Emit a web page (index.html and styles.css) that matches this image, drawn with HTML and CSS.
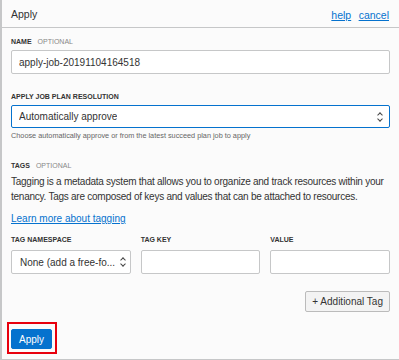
FILE: index.html
```html
<!DOCTYPE html>
<html lang="en">
<head>
    <meta charset="UTF-8">
    <meta name="viewport" content="width=device-width, initial-scale=1.0">
    <title>Apply</title>
    <link rel="stylesheet" href="styles.css">
</head>
<body>
    <div class="panel">
        <div class="panel-header">
            <span class="panel-title">Apply</span>
            <span class="header-links">
                <a href="#">help</a>
                <a href="#">cancel</a>
            </span>
        </div>

        <div class="panel-body">
            <div class="field">
                <label class="field-label">Name <span class="optional">Optional</span></label>
                <input class="text-input" type="text" value="apply-job-20191104164518">
            </div>

            <div class="field">
                <label class="field-label">Apply job plan resolution</label>
                <div class="select focused">
                    <span class="select-value">Automatically approve</span>
                    <span class="chevrons"></span>
                </div>
                <div class="help-text">Choose automatically approve or from the latest succeed plan job to apply</div>
            </div>

            <div class="field tags">
                <label class="field-label">Tags <span class="optional">Optional</span></label>
                <p class="tags-text">Tagging is a metadata system that allows you to organize and track resources within your tenancy. Tags are composed of keys and values that can be attached to resources.</p>
                <a class="learn-link" href="#">Learn more about tagging</a>

                <div class="tag-grid">
                    <div class="tag-col">
                        <label class="field-label">Tag namespace</label>
                        <div class="select small">
                            <span class="select-value">None (add a free-fo...</span>
                            <span class="chevrons"></span>
                        </div>
                    </div>
                    <div class="tag-col">
                        <label class="field-label">Tag key</label>
                        <input class="text-input small" type="text">
                    </div>
                    <div class="tag-col">
                        <label class="field-label">Value</label>
                        <input class="text-input small" type="text">
                    </div>
                </div>

                <div class="tag-actions">
                    <button class="btn-secondary">+ Additional Tag</button>
                </div>
            </div>

            <div class="footer">
                <span class="highlight">
                    <button class="btn-primary">Apply</button>
                </span>
            </div>
        </div>
    </div>
</body>
</html>
```

FILE: styles.css
```css
body {
    margin: 0;
    padding: 0;
    font-family: "Liberation Sans", Arial, sans-serif;
    background-color: #fbfbfb;
    color: #2b2b2b;
}
.panel {
    width: 399px;
    height: 360px;
    box-sizing: border-box;
    border-left: 2px solid #c6c7c8;
    border-bottom: 1px solid #c6c7c8;
    background-color: #fbfbfb;
    overflow: hidden;
}
.panel-header {
    height: 28px;
    box-sizing: border-box;
    border-bottom: 1px solid #c6c7c8;
    display: flex;
    align-items: center;
    justify-content: space-between;
    padding: 0 10px 0 9px;
}
.panel-title {
    font-size: 10.5px;
    color: #333;
}
.header-links a {
    font-size: 10.5px;
    color: #0572ce;
    margin-left: 3px;
}
.panel-body {
    padding: 10px 9px 0 9px;
}
.field {
    margin-bottom: 19px;
}
.field-label {
    display: block;
    font-size: 7px;
    font-weight: bold;
    text-transform: uppercase;
    color: #333;
    margin-bottom: 5px;
}
.optional {
    font-weight: normal;
    color: #888;
    margin-left: 4px;
}
.text-input {
    display: block;
    width: 100%;
    height: 24px;
    box-sizing: border-box;
    border: 1px solid #c6c7c8;
    border-radius: 2px;
    background: #fff;
    padding: 0 7px;
    font-family: inherit;
    font-size: 10px;
    color: #333;
    outline: none;
}
.select {
    height: 23px;
    box-sizing: border-box;
    border: 1px solid #c6c7c8;
    border-radius: 2px;
    background: #fff;
    display: flex;
    align-items: center;
    justify-content: space-between;
    padding: 0 6px 0 7px;
    font-size: 10px;
    color: #333;
}
.select-value {
    white-space: nowrap;
    overflow: hidden;
}
.select.focused {
    border-color: #0572ce;
}
.select.small {
    height: 24px;
    padding: 0 4px 0 8px;
}
.chevrons {
    flex: none;
    width: 6px;
    height: 10px;
    position: relative;
}
.chevrons::before,
.chevrons::after {
    content: "";
    position: absolute;
    left: 1px;
    width: 3px;
    height: 3px;
    border-left: 1px solid #444;
    border-top: 1px solid #444;
}
.chevrons::before {
    top: 1px;
    transform: rotate(45deg);
}
.chevrons::after {
    bottom: 1px;
    transform: rotate(-135deg);
}
.help-text {
    font-size: 7.3px;
    color: #666;
    margin-top: 3px;
}
.tags {
    margin-top: 22px;
}
.tags-text {
    margin: 3px 0 4px 0;
    font-size: 10px;
    line-height: 15px;
    letter-spacing: -0.25px;
    color: #333;
}
.learn-link {
    display: inline-block;
    font-size: 10px;
    color: #0572ce;
    margin-bottom: 12px;
}
.tag-grid {
    display: grid;
    grid-template-columns: 1fr 1fr 1fr;
    gap: 10px;
}
.tag-grid .field-label {
    margin-bottom: 7px;
}
.tag-actions {
    display: flex;
    justify-content: flex-end;
    margin-top: 17px;
}
.btn-secondary {
    height: 21px;
    padding: 0 6px;
    font-family: inherit;
    font-size: 10px;
    color: #333;
    background: #f3f3f3;
    border: 1px solid #bbb;
    border-radius: 2px;
    cursor: pointer;
}
.footer {
    margin-top: -9px;
}
.highlight {
    display: inline-block;
    border: 2px solid #e8000d;
    padding: 5px 3px 3px 2px;
    margin-left: -4px;
}
.btn-primary {
    display: block;
    height: 20px;
    padding: 0 7px;
    font-family: inherit;
    font-size: 10px;
    color: #fff;
    background: #0572ce;
    border: 1px solid #0572ce;
    border-radius: 2px;
    cursor: pointer;
}
```
